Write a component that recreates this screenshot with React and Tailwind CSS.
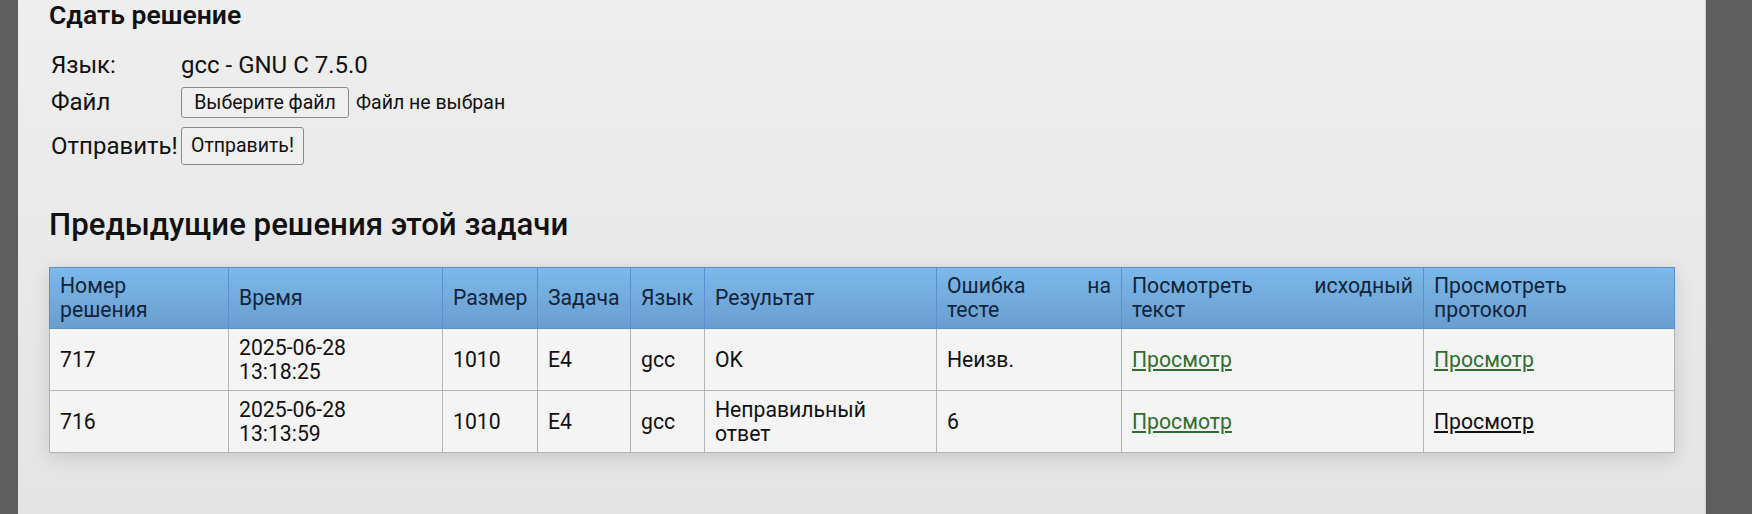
const headers = [
  { lines: [["Номер"], ["решения"]], w: "w-[179px]" },
  { lines: [["Время"]], w: "w-[214px]" },
  { lines: [["Размер"]], w: "w-[95px]" },
  { lines: [["Задача"]], w: "w-[93px]" },
  { lines: [["Язык"]], w: "w-[74px]" },
  { lines: [["Результат"]], w: "w-[232px]" },
  { lines: [["Ошибка", "на"], ["тесте"]], w: "w-[185px]" },
  { lines: [["Посмотреть", "исходный"], ["текст"]], w: "w-[302px]" },
  { lines: [["Просмотреть"], ["протокол"]], w: "w-[251px]" },
];

const runs = [
  {
    id: "717",
    time: ["2025-06-28", "13:18:25"],
    size: "1010",
    task: "E4",
    lang: "gcc",
    result: ["OK"],
    test: "Неизв.",
    protocolVisited: false,
  },
  {
    id: "716",
    time: ["2025-06-28", "13:13:59"],
    size: "1010",
    task: "E4",
    lang: "gcc",
    result: ["Неправильный", "ответ"],
    test: "6",
    protocolVisited: true,
  },
];

// justified multi-line cell text: every line but the last is spread edge to edge
const Lines = ({ lines }) =>
  lines.map((words, i) => (
    <div key={i} className="flex justify-between whitespace-nowrap">
      {words.map((w) => (
        <span key={w}>{w}</span>
      ))}
    </div>
  ));

const Link = ({ visited }) => (
  <a
    href="#"
    className={visited ? "underline text-[#111]" : "underline text-[#2f6e2f]"}
  >
    Просмотр
  </a>
);

const Td = ({ children }) => (
  <td className="border border-[#b4b4b4] px-[10px] py-[6.5px] align-middle">
    {children}
  </td>
);

export default function App() {
  return (
    <div
      className="flex h-[514px] w-full overflow-hidden text-[#111]"
      style={{ fontFamily: "Roboto, 'Noto Sans', sans-serif" }}
    >
      <div className="w-[18px] shrink-0 bg-[#5e5e5e]" />

      <main className="flex-1 bg-gradient-to-b from-[#eeeeee] to-[#e4e4e4] pl-[31px]">
        <h3 className="text-[26.5px] leading-[30px] font-semibold">Сдать решение</h3>

        <div className="mt-[23px] grid grid-cols-[132px_auto] items-center gap-y-[9px] text-[24px] leading-[25px]">
          <div className="pl-[2px]">Язык:</div>
          <div>gcc - GNU C 7.5.0</div>

          <div className="pl-[2px]">Файл</div>
          <div className="flex items-center gap-[7px]">
            <button className="h-[31px] w-[168px] rounded-[3px] border border-[#8a8a8a] bg-[#efefef] text-[19.5px] leading-none">
              Выберите файл
            </button>
            <span className="text-[19.5px]">Файл не выбран</span>
          </div>

          <div className="pl-[2px]">Отправить!</div>
          <div>
            <button className="h-[38px] w-[123px] rounded-[3px] border border-[#8a8a8a] bg-[#efefef] text-[19.5px] leading-none">
              Отправить!
            </button>
          </div>
        </div>

        <h2 className="mt-[41px] text-[31.2px] leading-[38px] font-medium">
          Предыдущие решения этой задачи
        </h2>

        <table className="mt-[23px] w-[1625px] table-fixed text-[21.2px] leading-[24px] shadow-[0_4px_18px_rgba(0,0,0,0.14)]">
          <thead>
            <tr className="bg-gradient-to-b from-[#7bbaea] to-[#6a9ccf]">
              {headers.map((h, i) => (
                <th
                  key={i}
                  className={`${h.w} border border-[#5b8fcf] px-[10px] py-[6px] text-left align-middle font-normal text-[#13243a]`}
                >
                  <Lines lines={h.lines} />
                </th>
              ))}
            </tr>
          </thead>
          <tbody className="bg-[#f4f4f4]">
            {runs.map((r) => (
              <tr key={r.id}>
                <Td>{r.id}</Td>
                <Td>
                  {r.time[0]}
                  <br />
                  {r.time[1]}
                </Td>
                <Td>{r.size}</Td>
                <Td>{r.task}</Td>
                <Td>{r.lang}</Td>
                <Td>
                  <Lines lines={r.result.map((l) => [l])} />
                </Td>
                <Td>{r.test}</Td>
                <Td>
                  <Link />
                </Td>
                <Td>
                  <Link visited={r.protocolVisited} />
                </Td>
              </tr>
            ))}
          </tbody>
        </table>
      </main>

      <div className="w-[47px] shrink-0 border-l border-[#d0d0d0] bg-[#5e5e5e]" />
    </div>
  );
}
